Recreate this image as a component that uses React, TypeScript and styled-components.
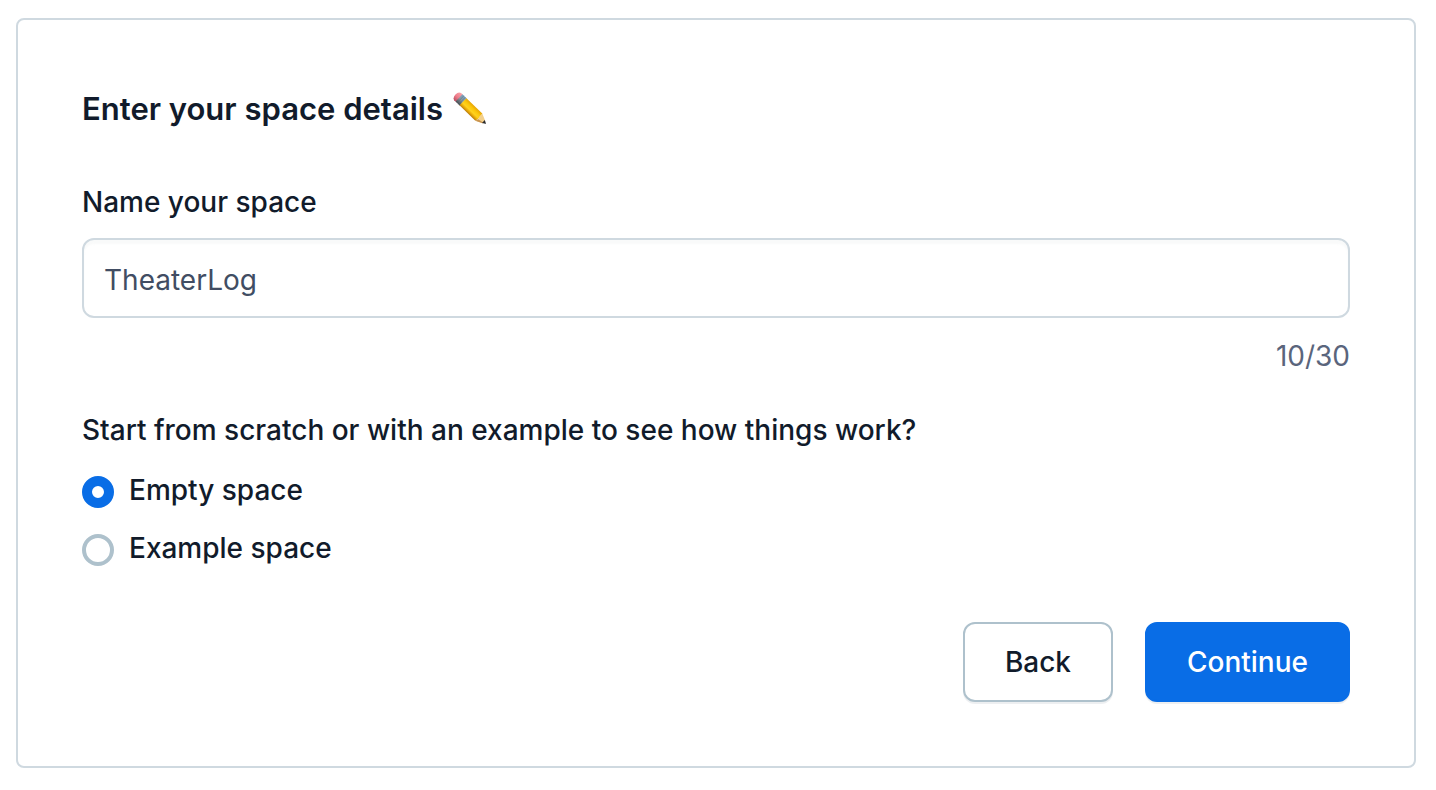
import React, { useState } from "react";
import styled, { createGlobalStyle, css } from "styled-components";

const GlobalStyle = createGlobalStyle`
  *, *::before, *::after { box-sizing: border-box; }
  body {
    margin: 0;
    background: #ffffff;
    color: #111b2b;
    font-family: Inter, "Liberation Sans", sans-serif;
    font-size: 28px;
    line-height: 40px;
  }
`;

const Page = styled.main`
  padding: 18px 20px 22px 16px;
`;

const Card = styled.form`
  border: 2px solid #cfd9e0;
  border-radius: 8px;
  padding: 64px;
`;

const Heading = styled.h1`
  display: flex;
  align-items: center;
  gap: 10px;
  margin: 0 0 48px;
  font-size: 31px;
  font-weight: 600;
  line-height: 50px;
`;

const Label = styled.label`
  display: block;
  margin-bottom: 16px;
  font-weight: 500;
`;

const TextInput = styled.input`
  display: block;
  width: 100%;
  height: 80px;
  padding: 4px 20px 0;
  border: 2px solid #cfd9e0;
  border-radius: 12px;
  background: #ffffff;
  box-shadow: inset 0 4px 2px rgba(225, 228, 232, 0.2);
  color: #414d63;
  font: inherit;
  outline: none;
`;

const Counter = styled.p`
  margin: 18px 0 34px;
  color: #5a657c;
  text-align: right;
`;

const Choices = styled.fieldset`
  display: flex;
  flex-direction: column;
  gap: 18px;
  margin: 0 0 54px;
  padding: 0;
  border: 0;
`;

const Question = styled.legend`
  margin-bottom: 20px;
  padding: 0;
  font-weight: 500;
`;

const Choice = styled.label`
  display: flex;
  align-items: flex-start;
  gap: 15px;
  font-weight: 500;
`;

const Radio = styled.input`
  appearance: none;
  flex: none;
  width: 32px;
  height: 32px;
  margin: 6px 0 0;
  border: 4px solid #aec1cc;
  border-radius: 50%;
  background: #ffffff;

  &:checked {
    border: 10px solid #096de6;
  }
`;

const Actions = styled.div`
  display: flex;
  justify-content: flex-end;
  gap: 32px;
`;

const Button = styled.button<{ $primary?: boolean }>`
  height: 80px;
  padding: 0 40px;
  border: 2px solid #aec1cc;
  border-radius: 12px;
  background: #ffffff;
  box-shadow: 0 2px 0 rgba(225, 228, 232, 0.6);
  color: #111b2b;
  font: inherit;
  font-weight: 500;
  cursor: pointer;

  ${({ $primary }) =>
    $primary &&
    css`
      border-color: #096de6;
      background: #096de6;
      color: #ffffff;
    `}
`;

const Pencil = () => (
  <svg width="34" height="34" viewBox="0 0 34 34" aria-hidden="true">
    <defs>
      <linearGradient id="wood" x1="0" y1="0" x2="0" y2="1">
        <stop offset="0" stopColor="#e6a406" />
        <stop offset="0.3" stopColor="#fbc60a" />
        <stop offset="0.6" stopColor="#ffd21f" />
        <stop offset="0.78" stopColor="#eeb00a" />
        <stop offset="1" stopColor="#b77908" />
      </linearGradient>
      <linearGradient id="metal" x1="0" y1="0" x2="0" y2="1">
        <stop offset="0" stopColor="#7ba5c4" />
        <stop offset="0.5" stopColor="#87979f" />
        <stop offset="1" stopColor="#454b50" />
      </linearGradient>
      <linearGradient id="rubber" x1="0" y1="0" x2="0" y2="1">
        <stop offset="0" stopColor="#f9a2a8" />
        <stop offset="0.55" stopColor="#ee7d8b" />
        <stop offset="1" stopColor="#b84e60" />
      </linearGradient>
    </defs>
    <g transform="translate(33 32) rotate(44)">
      <path d="M-36 -5H-39.5Q-42.5 -4 -42.5 0T-39.5 5H-36Z" fill="url(#rubber)" />
      <rect x="-37.5" y="-5" width="6" height="10" fill="url(#metal)" />
      <path d="M-35.5 -5V5M-33.5 -5V5" stroke="#56656f" strokeWidth="0.7" opacity="0.6" />
      <path d="M-32 -5H-10L-8.5 -1.5L-10 5H-32Z" fill="url(#wood)" />
      <path d="M-10 -5L-3 -1.8V1.8L-10 5L-9 2L-10 -1Z" fill="#f3d08c" />
      <path d="M-10 5L-9 2L-3 0.8V1.8Z" fill="#c89350" />
      <path d="M-3.6 -2L-0.6 -0.4Q0 0 -0.6 0.4L-3.6 2Z" fill="#292a2d" />
    </g>
  </svg>
);

const MAX_LENGTH = 30;

export default function App() {
  const [name, setName] = useState("TheaterLog");
  const [kind, setKind] = useState("empty");

  return (
    <>
      <GlobalStyle />
      <Page>
        <Card onSubmit={(event) => event.preventDefault()}>
          <Heading>
            Enter your space details
            <Pencil />
          </Heading>
          <Label htmlFor="space-name">Name your space</Label>
          <TextInput
            id="space-name"
            type="text"
            maxLength={MAX_LENGTH}
            value={name}
            onChange={(event) => setName(event.target.value)}
          />
          <Counter>{`${name.length}/${MAX_LENGTH}`}</Counter>
          <Choices>
            <Question>Start from scratch or with an example to see how things work?</Question>
            <Choice>
              <Radio
                type="radio"
                name="kind"
                checked={kind === "empty"}
                onChange={() => setKind("empty")}
              />
              Empty space
            </Choice>
            <Choice>
              <Radio
                type="radio"
                name="kind"
                checked={kind === "example"}
                onChange={() => setKind("example")}
              />
              Example space
            </Choice>
          </Choices>
          <Actions>
            <Button type="button">Back</Button>
            <Button type="submit" $primary>
              Continue
            </Button>
          </Actions>
        </Card>
      </Page>
    </>
  );
}
